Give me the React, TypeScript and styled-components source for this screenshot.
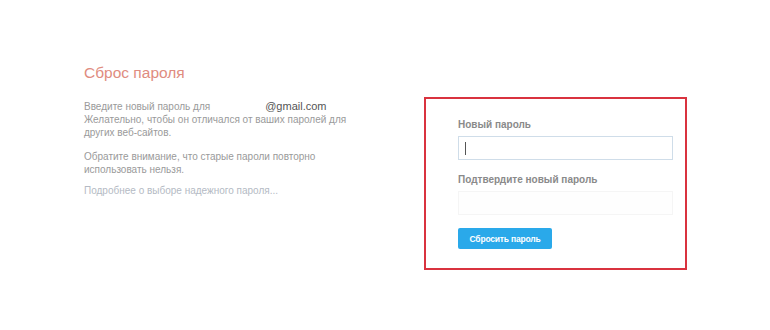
import React from "react";
import styled, { createGlobalStyle } from "styled-components";

const Global = createGlobalStyle`
  html, body { margin: 0; padding: 0; background: #ffffff; }
  body { font-family: "Liberation Sans", Arial, sans-serif; }
`;

const Page = styled.div`
  width: 770px;
  height: 330px;
  box-sizing: border-box;
  padding: 62px 0 0 84px;
  display: flex;
  align-items: flex-start;
  background: #fff;
`;

const Info = styled.div`
  width: 340px;
  display: flex;
  flex-direction: column;
`;

const Title = styled.h1`
  margin: 0 0 16px 0;
  font-size: 15.5px;
  line-height: 22px;
  font-weight: normal;
  color: #e08c80;
`;

const Para = styled.p<{ $gap?: number }>`
  margin: 0 0 ${(p) => p.$gap ?? 11}px 0;
  width: 270px;
  font-size: 10px;
  line-height: 13px;
  color: #9a9a9a;
`;

const Email = styled.span`
  display: inline-block;
  margin-left: 55px;
  font-size: 11px;
  color: #555;
`;

const MoreLink = styled.a`
  font-size: 10px;
  line-height: 13px;
  color: #b4bac4;
  text-decoration: none;
`;

const FormBox = styled.div`
  margin-top: 35px;
  width: 263px;
  height: 173px;
  box-sizing: border-box;
  border: 2px solid #d9333f;
  padding: 19px 12px 0 32px;
  display: flex;
  flex-direction: column;
`;

const Label = styled.label`
  font-size: 10px;
  line-height: 13px;
  font-weight: bold;
  color: #8a8a8a;
  margin-bottom: 5px;
`;

const Input = styled.div<{ $active?: boolean }>`
  width: 215px;
  height: 24px;
  box-sizing: border-box;
  border: 1px solid ${(p) => (p.$active ? "#cfdde9" : "#f5f5f5")};
  background: ${(p) => (p.$active ? "#fff" : "#fefefe")};
  margin-bottom: 13px;
  display: flex;
  align-items: center;
  padding-left: 6px;
`;

const Caret = styled.span`
  width: 1px;
  height: 13px;
  background: #555;
`;

const Button = styled.button`
  width: 94px;
  height: 21px;
  border: none;
  border-radius: 2px;
  background: #2aa9ea;
  color: #fff;
  font-family: "Liberation Sans", Arial, sans-serif;
  font-size: 8.5px;
  font-weight: bold;
  padding: 0;
  letter-spacing: -0.2px;
`;

export default function App() {
  return (
    <>
      <Global />
      <Page>
        <Info>
          <Title>Сброс пароля</Title>
          <Para>
            Введите новый пароль для<Email>@gmail.com</Email>
            <br />
            Желательно, чтобы он отличался от ваших паролей для других
            веб-сайтов.
          </Para>
          <Para $gap={8}>
            Обратите внимание, что старые пароли повторно использовать нельзя.
          </Para>
          <MoreLink href="#">Подробнее о выборе надежного пароля...</MoreLink>
        </Info>
        <FormBox>
          <Label>Новый пароль</Label>
          <Input $active>
            <Caret />
          </Input>
          <Label>Подтвердите новый пароль</Label>
          <Input />
          <Button>Сбросить пароль</Button>
        </FormBox>
      </Page>
    </>
  );
}
